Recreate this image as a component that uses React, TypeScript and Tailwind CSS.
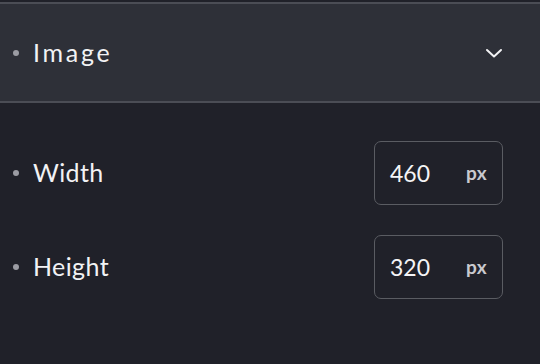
import React from "react";

const F = { fontFamily: "Lato, 'Open Sans', sans-serif" };

function Row({ label, value }: { label: string; value: string }) {
  return (
    <div className="flex items-center h-[64px] pl-[13px] pr-[37px]">
      <span className="w-[6px] h-[6px] rounded-full bg-[#9b9ca3]" />
      <span className="ml-[14px] text-[25px] text-[#f2f2f4] tracking-[0.4px]" style={F}>
        {label}
      </span>
      <div className="ml-auto w-[129px] h-[64px] rounded-[7px] border-[1.5px] border-[#5a5c62] flex items-center pl-[15px] pr-[15px]">
        <span className="text-[23px] text-[#f4f4f6]" style={F}>{value}</span>
        <span className="ml-auto text-[19px] font-bold text-[#c9c9ce] tracking-[0.3px]" style={F}>px</span>
      </div>
    </div>
  );
}

export default function App() {
  return (
    <div className="w-[540px] h-[364px] bg-[#202129] overflow-hidden">
      <div className="h-[2px] bg-[#202129]" />
      <div className="h-[101px] bg-[#2e3038] border-t-2 border-b-2 border-[#4b4d55] flex items-center pl-[13px] pr-[37px]">
        <span className="w-[6px] h-[6px] rounded-full bg-[#9b9ca3]" />
        <span className="ml-[14px] text-[25px] text-[#f2f2f4] tracking-[2.7px]" style={F}>
          Image
        </span>
        <svg className="ml-auto" width="18" height="12" viewBox="0 0 18 12" fill="none">
          <path d="M2 3 L9 9.5 L16 3" stroke="#f2f2f4" strokeWidth="2" strokeLinecap="round" strokeLinejoin="round" />
        </svg>
      </div>
      <div className="pt-[38px] flex flex-col gap-[30px]">
        <Row label="Width" value="460" />
        <Row label="Height" value="320" />
      </div>
    </div>
  );
}
